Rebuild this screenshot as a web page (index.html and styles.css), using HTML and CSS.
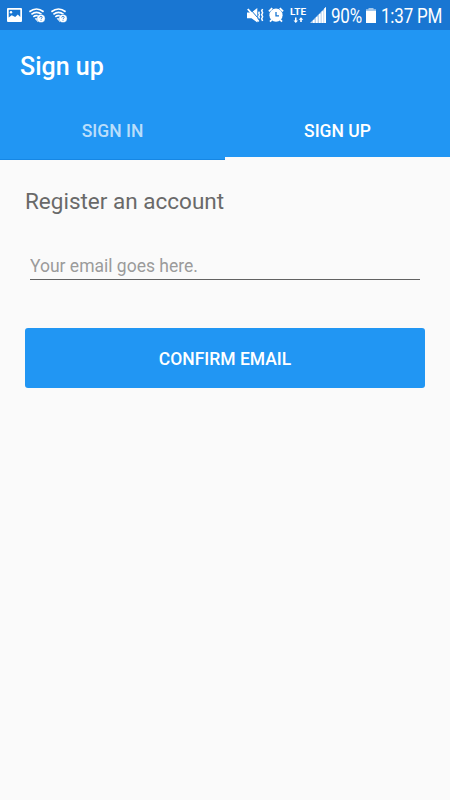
FILE: index.html
```html
<!DOCTYPE html>
<html lang="en">
<head>
<meta charset="utf-8">
<title>Sign up</title>
<link rel="stylesheet" href="styles.css">
</head>
<body>
<header class="status">
  <svg class="picture" width="15" height="15" viewBox="0 0 15 15"><path fill="#fff" fill-rule="evenodd" d="M1 0h13q1 0 1 1v12q0 1-1 1H1q-1 0-1-1V1q0-1 1-1zM1.7 1.7v7.8l3-2.3 3.5 1.8 2.6-2.5 2.5 2.5V1.7z"/><circle cx="4" cy="4.2" r="1.2" fill="#fff"/></svg>
  <svg class="wifi" width="17" height="16" viewBox="0 0 17 16"><use href="#wifi-query"/></svg>
  <svg class="wifi" width="17" height="16" viewBox="0 0 17 16"><g id="wifi-query"><path d="M.4 3.7Q7.5-1.7 14.6 3.7M2.4 6.3q5.1-4 10.2 0M4.3 8.8q3.2-2.5 6.4 0" fill="none" stroke="#fff" stroke-width="1.7"/><path d="M5.6 10.6q2-1.4 3.4 0v3.6z" fill="#fff"/><circle cx="12" cy="10.5" r="4.1" fill="#fff" stroke="#1976d2" stroke-width=".4"/><path d="M10.7 9.6q.1-1.3 1.3-1.3t1.2 1.1q0 .7-1.2 1.3v.5M12 11.9v.9" fill="none" stroke="#1976d2" stroke-width=".8"/></g></svg>
  <span class="spacer"></span>
  <svg class="mute" width="17" height="16" viewBox="0 0 17 16"><path fill="#fff" d="M0 4.6h4.5L10.3 0v14.4l-5.8-4.2H0z"/><path d="M2.4.2l8 9.2" stroke="#1976d2" stroke-width="1"/><path d="M.8 1l10.9 12.5" stroke="#fff" stroke-width="1.9"/><path d="M12.4 3.6l-.6 1.4.7 1.8-.7 1.8.7 1.8M15.6 1l-.9 1.8.9 2-.9 2 .9 2-.9 2 .9 2.2" fill="none" stroke="#fff" stroke-width="1.5"/></svg>
  <svg class="alarm" width="16" height="16" viewBox="0 0 16 16"><path d="M.9 4.4L4.2 1.2M15.1 4.4L11.8 1.2M4 12.5l-2 2.2M12 12.5l2 2.2" stroke="#fff" stroke-width="1.8"/><circle cx="8" cy="8.2" r="6.6" fill="#fff"/><path d="M8 5v3.8h3" fill="none" stroke="#1976d2" stroke-width="1.3"/></svg>
  <svg class="lte" width="17" height="16" viewBox="0 0 17 16"><text class="lte-label" x="0" y="7" textLength="16" lengthAdjust="spacingAndGlyphs">LTE</text><path fill="#fff" d="M5 9.5h1.5v3H8L5.8 15 3.5 12.5H5zM10.2 14v-2.2H8.7L11 9.2l2.3 2.6h-1.5V14z"/></svg>
  <svg class="signal" width="16" height="16" viewBox="0 0 16 16"><path fill="#b6d2ef" d="M0 16L16 0v16z"/><path fill="#fff" d="M3 13h1.6v3H3zM6 10h1.6v6H6zM9 7h1.6v9H9zM11.7 4.2h1.7V16h-1.7zM14.2 1.6L16 0v16h-1.8z"/></svg>
  <span class="status-text percent">90%</span>
  <svg class="battery" width="10" height="16" viewBox="0 0 10 16"><path fill="#a3c8ed" d="M2.5 0h5v1.2H10v2H0v-2h2.5z"/><path fill="#fff" d="M0 3h10v12H0z"/></svg>
  <span class="status-text clock">1:37 PM</span>
</header>
<div class="toolbar">
  <h1 class="title">Sign up</h1>
  <nav class="tabs">
    <a class="tab">SIGN IN</a>
    <a class="tab active">SIGN UP</a>
  </nav>
</div>
<main class="content">
  <h2 class="heading">Register an account</h2>
  <input class="email" type="email" placeholder="Your email goes here.">
  <button class="confirm">CONFIRM EMAIL</button>
</main>
</body>
</html>
```

FILE: styles.css
```css
* { box-sizing: border-box; }
body { margin: 0; min-height: 800px; background: #fafafa; font-family: Roboto, sans-serif; }
.status { height: 30px; display: flex; align-items: flex-start; padding: 0 7px; background: #1976d2; }
.status svg { display: block; flex: none; overflow: visible; }
.picture { margin-top: 8px; }
.wifi { margin: 8px 0 0 7px; }
.wifi + .wifi { margin-left: 5px; }
.spacer { flex: 1; }
.mute { margin: 8px 4px 0 0; }
.alarm { margin: 7px 6px 0 0; }
.lte { margin: 8px 3px 0 0; }
.signal { margin: 7px 5px 0 0; }
.percent { width: 31px; margin: 5px 4px 0 0; }
.battery { margin: 8px 5px 0 0; }
.clock { width: 62px; margin: 5px 0 0; }
.status-text { flex: none; height: 22px; line-height: 22px; font-size: 17px; letter-spacing: -.2px; white-space: nowrap; color: #fff; transform: scaleY(1.15); }
.lte-label { font-size: 9.5px; font-weight: 700; fill: #fff; }
.toolbar { height: 130px; display: flex; flex-direction: column; background: #2196f3; color: #fff; }
.title { margin: 0; padding: 0 20px; height: 70px; font-size: 25px; line-height: 74px; font-weight: 500; }
.tabs { display: grid; grid-template-columns: 1fr 1fr; height: 60px; }
.tab { text-align: center; font-size: 17.5px; font-weight: 500; line-height: 63px; color: rgba(255, 255, 255, .7); border-bottom: 1px solid #1687e4; height: 60px; }
.active { color: #fff; border-bottom: 3px solid #fafafa; }
.content { display: flex; flex-direction: column; padding: 26px 25px; }
.heading { margin: 0; height: 30px; font-size: 22.5px; line-height: 31px; font-weight: 400; color: #696969; }
.email { margin: 36px 5px 0; height: 28px; padding: 1px 0 0; border: 0; border-bottom: 1px solid #626262; border-radius: 0; background: transparent; font: 400 17.5px Roboto, sans-serif; outline: 0; }
.email::placeholder { color: #9b9b9b; opacity: 1; }
.confirm { margin-top: 48px; height: 60px; border: 0; border-radius: 3px; background: #2196f3; color: #fff; font: 500 17.5px Roboto, sans-serif; padding: 1px 0 0; }
```
